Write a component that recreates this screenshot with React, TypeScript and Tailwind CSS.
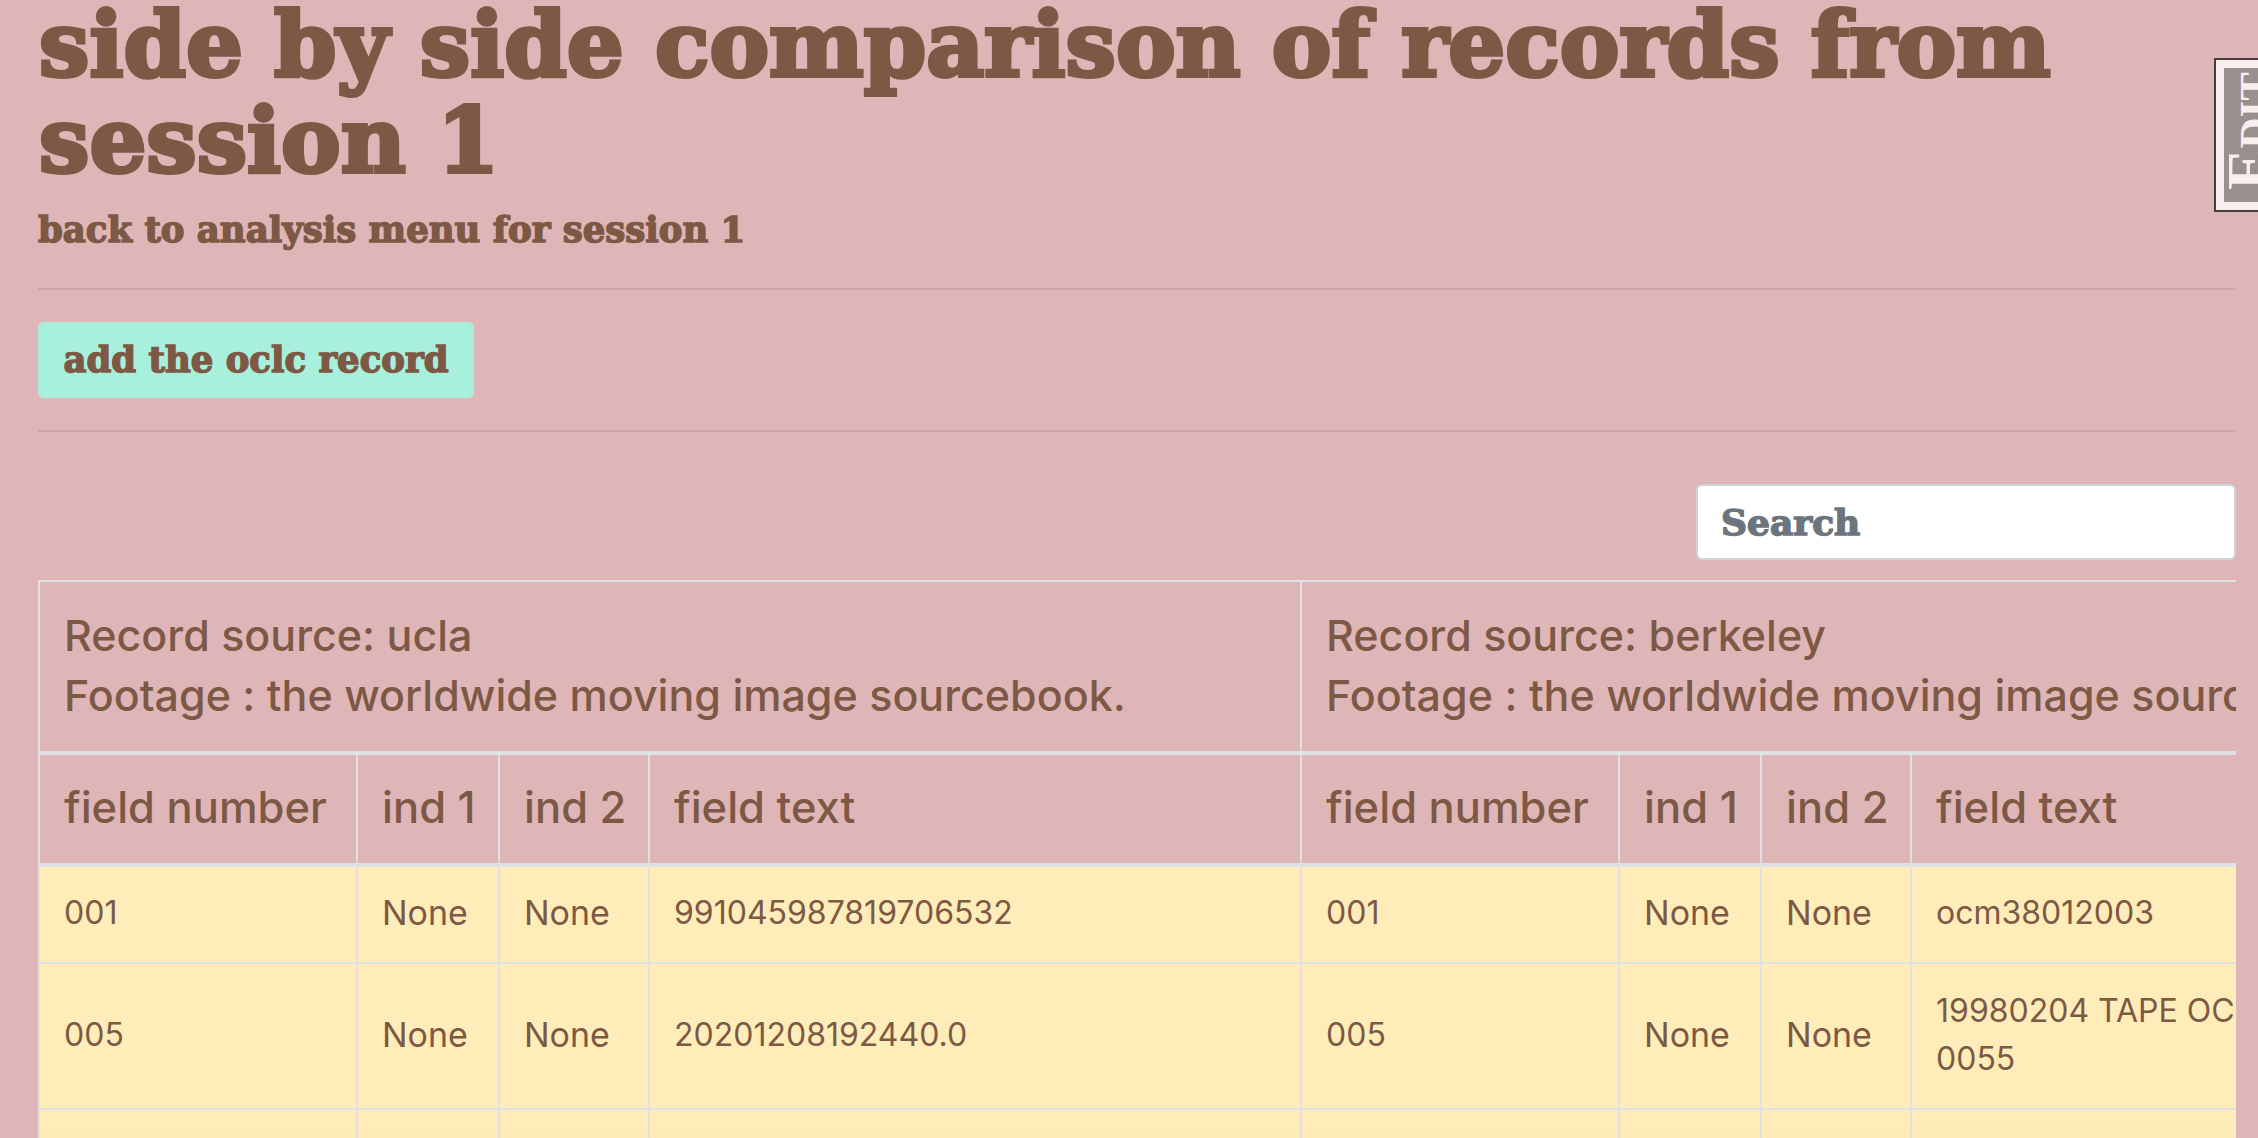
import React from 'react';

const slab = { fontFamily: '"DejaVu Serif", serif' };

const columns = ['field number', 'ind 1', 'ind 2', 'field text'];

const rows = [
  { h: 'h-[98px]', num: ['001', '001'], text: ['991045987819706532', 'ocm38012003'], ind: 'None' },
  { h: 'h-[146px]', num: ['005', '005'], text: ['20201208192440.0', '19980204 TAPE OCLC 0055'], ind: 'None' },
  { h: 'h-[98px]', num: ['', ''], text: ['', ''], ind: '' },
];

const cell = 'border-2 border-[#e0e0e6] px-[24px] pb-[3px]';

function Cols() {
  return (
    <>
      <col className="w-[318px]" />
      <col className="w-[142px]" />
      <col className="w-[150px]" />
    </>
  );
}

export default function App() {
  return (
    <div className="h-[1138px] overflow-hidden bg-[#dfb6b8] text-[#7d5945] relative" style={{ fontFamily: 'Inter, sans-serif' }}>
      <div className="pl-[38px] pr-[22px]">
        <h1 className="-mt-[3px] pl-[1px] text-[89.5px] leading-[96px] font-bold text-[#7d5945] [-webkit-text-stroke:4px_#7d5945]" style={slab}>
          side by side comparison of records from session 1
        </h1>
        <a className="block mt-[17px] text-[35.5px] leading-[48px] font-bold [-webkit-text-stroke:1.5px_#7d5945]" style={slab}>
          back to analysis menu for session 1
        </a>
        <hr className="mt-[34px] border-t-2 border-[#cfa5a7]" />
        <button className="mt-[32px] block h-[76px] w-[436px] rounded-[6px] bg-[#a8f0dc] text-[35.5px] font-bold [-webkit-text-stroke:1.5px_#7d5945]" style={slab}>
          add the oclc record
        </button>
        <hr className="mt-[32px] border-t-2 border-[#cfa5a7]" />
        <div className="mt-[52px] flex justify-end">
          <input
            placeholder="Search"
            className="h-[76px] w-[540px] rounded-[6px] border-2 border-[#ced4da] bg-white px-[23px] text-[36px] font-bold placeholder:text-[#6c757d] [-webkit-text-stroke:1.5px_#6c757d]"
            style={slab}
          />
        </div>
        <div className="mt-[20px] overflow-hidden">
          <table className="w-[2324px] table-fixed border-collapse">
            <colgroup>
              <Cols />
              <col className="w-[652px]" />
              <Cols />
              <col className="w-[450px]" />
            </colgroup>
            <thead>
              <tr className="h-[172px]">
                {['ucla', 'berkeley'].map((source) => (
                  <th key={source} colSpan={4} className={`${cell} border-b-[4px] text-left text-[43px] leading-[60px] font-medium whitespace-nowrap overflow-hidden`}>
                    Record source: {source}
                    <br />
                    Footage : the worldwide moving image sourcebook.
                  </th>
                ))}
              </tr>
              <tr className="h-[112px]">
                {[...columns, ...columns].map((c, i) => (
                  <th key={i} className={`${cell} border-b-[4px] text-left text-[43.5px] font-medium whitespace-nowrap`}>{c}</th>
                ))}
              </tr>
            </thead>
            <tbody className="text-[32px] leading-[48px] bg-linear-to-b from-[#ffedb9] from-75% to-[#fae3af]">
              {rows.map((row, i) => (
                <tr key={i} className={row.h}>
                  {row.num.map((num, j) => (
                    <React.Fragment key={j}>
                      <td className={cell}>{num}</td>
                      <td className={`${cell} text-[34px]`}>{row.ind}</td>
                      <td className={`${cell} text-[34px]`}>{row.ind}</td>
                      <td className={cell}>{row.text[j]}</td>
                    </React.Fragment>
                  ))}
                </tr>
              ))}
            </tbody>
          </table>
        </div>
      </div>
      {/* edit tab sticking out of the right edge */}
      <div className="absolute left-[2214px] top-[58px] h-[154px] w-[80px] border-[2px] border-[#4a3c3c] bg-[#f8eeee] p-[8px]">
        <div className="flex h-full w-full items-center justify-center overflow-hidden bg-[#9a8f8f]">
          <span className="-translate-x-[6px] -translate-y-[4px] -rotate-90 whitespace-nowrap text-[62px] leading-none font-bold text-[#f8eeee] [font-variant:small-caps]" style={{ fontFamily: '"Liberation Serif", serif' }}>Edit</span>
        </div>
      </div>
    </div>
  );
}
